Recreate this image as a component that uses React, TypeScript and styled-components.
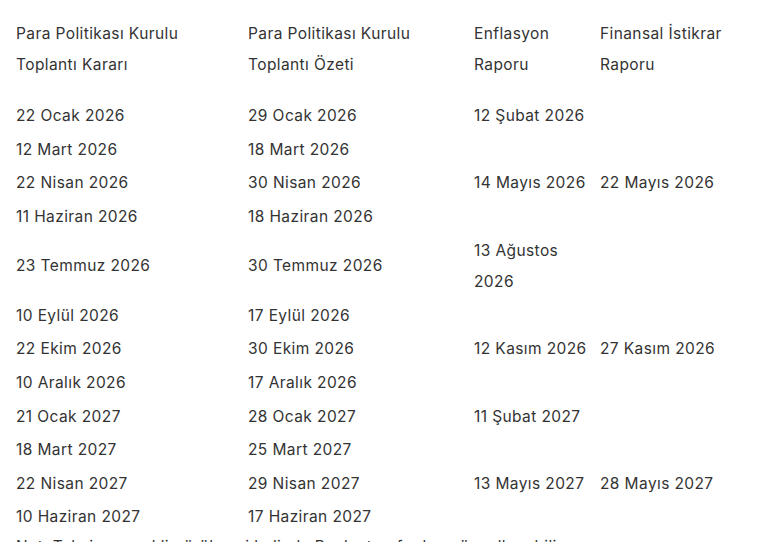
import React from "react";
import styled, { createGlobalStyle } from "styled-components";

const Global = createGlobalStyle`
  html, body { margin: 0; padding: 0; background: #ffffff; }
  body { font-family: "Inter", "Open Sans", sans-serif; color: #333333; }
`;

const Page = styled.div`
  padding: 16.5px 16px 0 16px;
  width: 770px;
  height: 542px;
  box-sizing: border-box;
  overflow: hidden;
`;

const Table = styled.table`
  border-collapse: collapse;
  font-size: 15.5px;
  letter-spacing: 0.4px;
  line-height: 31.6px;
  color: #333333;
  table-layout: fixed;
  width: 730px;
`;

const Col = styled.col<{ $w: number }>`
  width: ${(p) => p.$w}px;
`;

const HeadCell = styled.th`
  text-align: left;
  font-weight: 400;
  vertical-align: top;
  padding: 1px 10px 18.5px 0;
`;

const Cell = styled.td`
  vertical-align: middle;
  padding: 1px 10px 1px 0;
`;

const Note = styled.p`
  margin: 0;
  padding-top: 4px;
  font-size: 15.5px;
  letter-spacing: 0.4px;
  line-height: 18px;
  white-space: nowrap;
`;

const headers = [
  "Para Politikası Kurulu Toplantı Kararı",
  "Para Politikası Kurulu Toplantı Özeti",
  "Enflasyon Raporu",
  "Finansal İstikrar Raporu",
];

const rows: string[][] = [
  ["22 Ocak 2026", "29 Ocak 2026", "12 Şubat 2026", ""],
  ["12 Mart 2026", "18 Mart 2026", "", ""],
  ["22 Nisan 2026", "30 Nisan 2026", "14 Mayıs 2026", "22 Mayıs 2026"],
  ["11 Haziran 2026", "18 Haziran 2026", "", ""],
  ["23 Temmuz 2026", "30 Temmuz 2026", "13 Ağustos 2026", ""],
  ["10 Eylül 2026", "17 Eylül 2026", "", ""],
  ["22 Ekim 2026", "30 Ekim 2026", "12 Kasım 2026", "27 Kasım 2026"],
  ["10 Aralık 2026", "17 Aralık 2026", "", ""],
  ["21 Ocak 2027", "28 Ocak 2027", "11 Şubat 2027", ""],
  ["18 Mart 2027", "25 Mart 2027", "", ""],
  ["22 Nisan 2027", "29 Nisan 2027", "13 Mayıs 2027", "28 Mayıs 2027"],
  ["10 Haziran 2027", "17 Haziran 2027", "", ""],
];

export default function App() {
  return (
    <>
      <Global />
      <Page>
        <Table>
          <colgroup>
            <Col $w={232} />
            <Col $w={226} />
            <Col $w={126} />
            <Col $w={146} />
          </colgroup>
          <thead>
            <tr>
              {headers.map((h) => (
                <HeadCell key={h}>{h}</HeadCell>
              ))}
            </tr>
          </thead>
          <tbody>
            {rows.map((r, i) => (
              <tr key={i}>
                {r.map((c, j) => (
                  <Cell key={j}>{c}</Cell>
                ))}
              </tr>
            ))}
          </tbody>
        </Table>
        <Note>Not: Takvim, gerekli görülmesi halinde Banka tarafından güncellenebilir.</Note>
      </Page>
    </>
  );
}
